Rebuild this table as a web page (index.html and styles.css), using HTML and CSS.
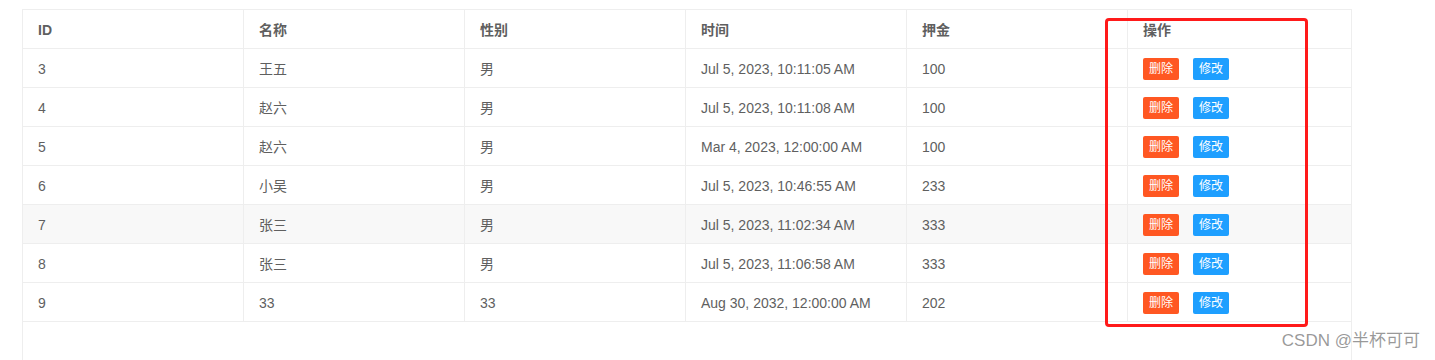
FILE: index.html
```html
<!DOCTYPE html>
<html lang="zh-CN">
<head>
<meta charset="utf-8">
<title>表格</title>
<link rel="stylesheet" href="styles.css">
</head>
<body>
<div class="page">
  <div class="table-view">
    <table class="data-table">
      <colgroup>
        <col class="c"><col class="c"><col class="c"><col class="c"><col class="c"><col>
      </colgroup>
      <thead>
        <tr><th>ID</th><th>名称</th><th>性别</th><th>时间</th><th>押金</th><th>操作</th></tr>
      </thead>
      <tbody>
        <tr><td>3</td><td>王五</td><td>男</td><td>Jul 5, 2023, 10:11:05 AM</td><td>100</td><td><span class="btn danger">删除</span><span class="btn normal">修改</span></td></tr>
        <tr><td>4</td><td>赵六</td><td>男</td><td>Jul 5, 2023, 10:11:08 AM</td><td>100</td><td><span class="btn danger">删除</span><span class="btn normal">修改</span></td></tr>
        <tr><td>5</td><td>赵六</td><td>男</td><td>Mar 4, 2023, 12:00:00 AM</td><td>100</td><td><span class="btn danger">删除</span><span class="btn normal">修改</span></td></tr>
        <tr><td>6</td><td>小吴</td><td>男</td><td>Jul 5, 2023, 10:46:55 AM</td><td>233</td><td><span class="btn danger">删除</span><span class="btn normal">修改</span></td></tr>
        <tr class="hover"><td>7</td><td>张三</td><td>男</td><td>Jul 5, 2023, 11:02:34 AM</td><td>333</td><td><span class="btn danger">删除</span><span class="btn normal">修改</span></td></tr>
        <tr><td>8</td><td>张三</td><td>男</td><td>Jul 5, 2023, 11:06:58 AM</td><td>333</td><td><span class="btn danger">删除</span><span class="btn normal">修改</span></td></tr>
        <tr><td>9</td><td>33</td><td>33</td><td>Aug 30, 2032, 12:00:00 AM</td><td>202</td><td><span class="btn danger">删除</span><span class="btn normal">修改</span></td></tr>
      </tbody>
    </table>
  </div>
  <div class="highlight"></div>
  <div class="watermark">CSDN @半杯可可</div>
</div>
</body>
</html>
```
FILE: styles.css
```css
html, body {
  margin: 0;
  padding: 0;
  background: #fff;
  overflow: hidden;
}
body {
  font-family: "Liberation Sans", Arial, "Noto Sans CJK SC", sans-serif;
  font-size: 14px;
  color: #5f5f5f;
}
.page {
  position: relative;
  width: 1435px;
  height: 360px;
  overflow: hidden;
}
.table-view {
  margin: 9px 0 0 22px;
  width: 1328px;
  height: 420px;
  border: 1px solid #eee;
}
.data-table {
  width: 1328px;
  table-layout: fixed;
  border-collapse: separate;
  border-spacing: 0;
}
.data-table col.c {
  width: 221px;
}
.data-table th,
.data-table td {
  padding: 0 15px;
  border-right: 1px solid #eee;
  border-bottom: 1px solid #eee;
  text-align: left;
  vertical-align: middle;
  white-space: nowrap;
  line-height: 20px;
}
.data-table th:last-child,
.data-table td:last-child {
  border-right: 0;
}
.data-table th {
  height: 37px;
  padding-top: 1px;
  font-weight: bold;
  color: #5f5f5f;
}
.data-table td {
  height: 36px;
  padding-top: 2px;
}
.data-table tr.hover td {
  background: #f8f8f8;
}
.btn {
  display: inline-block;
  box-sizing: border-box;
  height: 22px;
  line-height: 20px;
  padding: 0 5px;
  border: 1px solid transparent;
  border-radius: 2px;
  font-size: 12px;
  color: #fff;
  vertical-align: middle;
}
.btn + .btn {
  margin-left: 14px;
}
.btn.danger {
  background: #ff5722;
}
.btn.normal {
  background: #1e9fff;
}
.highlight {
  position: absolute;
  left: 1105px;
  top: 18px;
  width: 197px;
  height: 303px;
  border: 3px solid #ff1a1a;
  border-radius: 4px;
}
.watermark {
  position: absolute;
  right: 15px;
  top: 331px;
  font-size: 17px;
  line-height: 20px;
  color: rgba(120, 120, 120, 0.75);
}
```
